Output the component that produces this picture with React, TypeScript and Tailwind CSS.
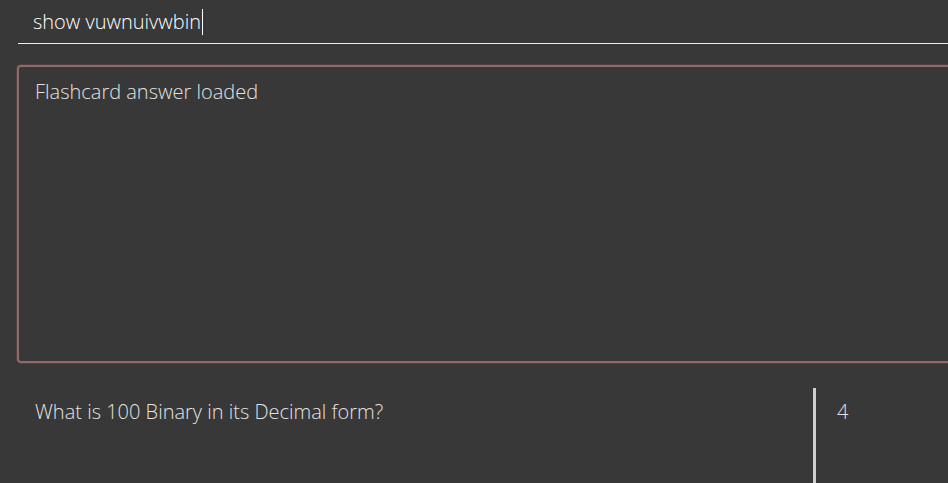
import React from 'react';

const font = { fontFamily: '"Open Sans", "Noto Sans", sans-serif' };

export default function App() {
  return (
    <div
      className="w-[948px] h-[483px] overflow-hidden bg-[#383838] flex flex-col font-[350]"
      style={font}
    >
      {/* Command input */}
      <div className="ml-[18px] h-[44px] border-b border-[#ececec] flex items-center pl-[15px]">
        <span className="text-[20px] text-white leading-none">show vuwnuivwbin</span>
        <span className="w-px h-[26px] bg-white ml-[1px]" />
      </div>

      {/* Result display */}
      <div className="mt-[21px] ml-[17px] mr-[-12px] h-[298px] shrink-0 border-2 border-[#926868] shadow-[0_0_0_1px_#4e4242] rounded-[4px] px-4 pt-[10px]">
        <p className="text-[20px] text-[#e2e2e2]">Flashcard answer loaded</p>
      </div>

      {/* Flashcard row */}
      <div className="flex flex-1 mt-[25px]">
        <div className="w-[796px] pl-[35px] pt-[9px]">
          <p className="text-[20px] text-[#e2e2e2]">What is 100 Binary in its Decimal form?</p>
        </div>
        <div className="w-[3px] bg-[#cfcfcf] ml-[17px]" />
        <div className="pl-[21px] pt-[9px]">
          <p className="text-[20px] text-[#e2e2e2]">4</p>
        </div>
      </div>
    </div>
  );
}
